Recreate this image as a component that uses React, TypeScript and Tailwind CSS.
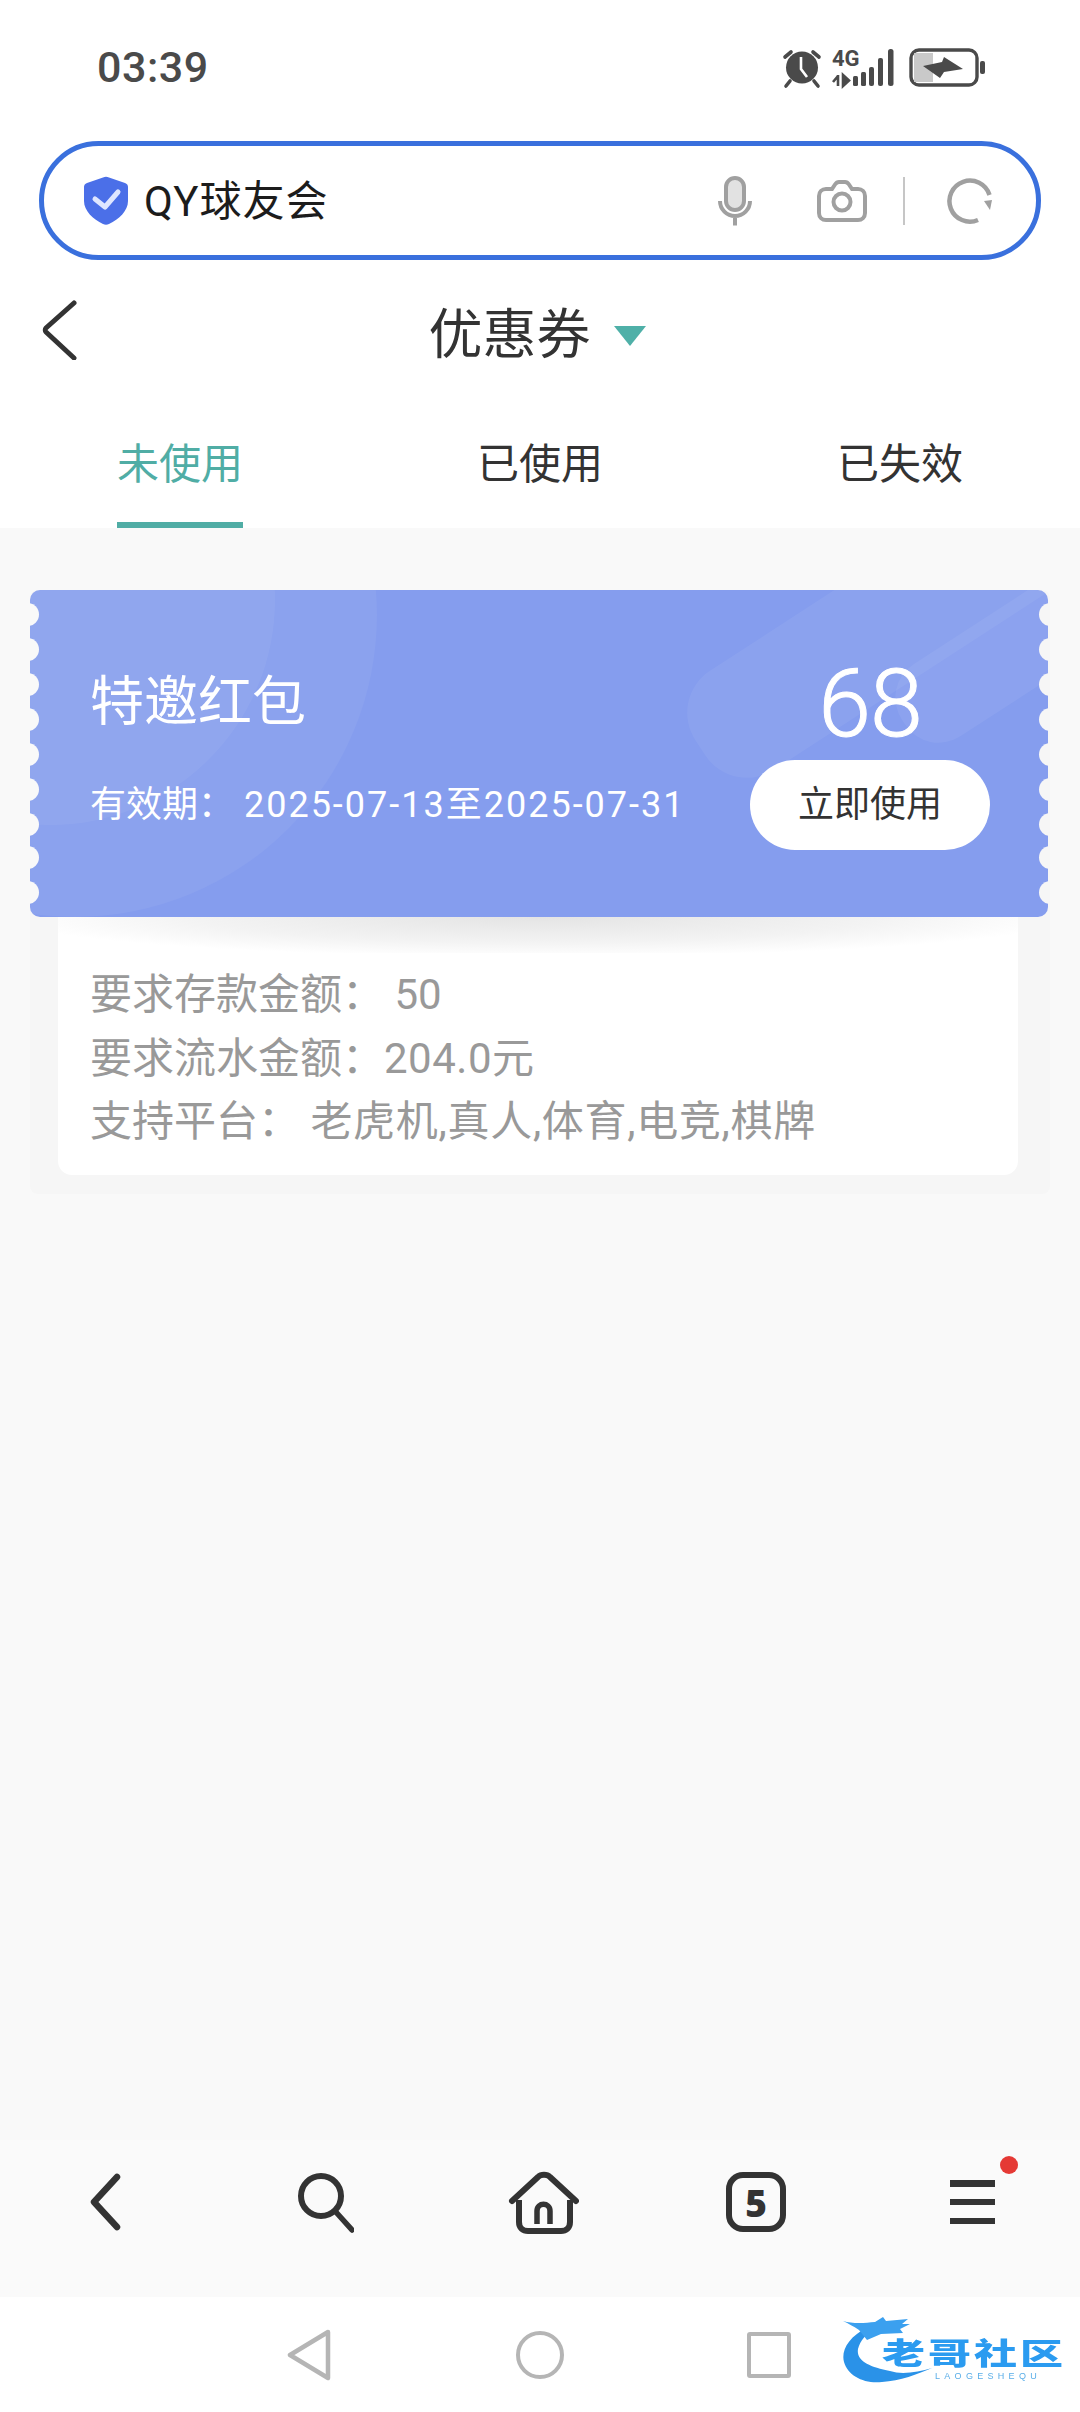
import React from "react";

const scallops = [25, 60, 95, 130, 165, 200, 235, 268, 303];

function StatusIcons() {
  return (
    <svg width="210" height="56" viewBox="0 0 210 56" fill="none" className="shrink-0">
      <g transform="translate(-780,-40)">
        <circle cx="802" cy="67.500" r="16" fill="#4a4a4a" />
        <path d="M801 57v12l6 8" stroke="#fff" strokeWidth="2.600" />
        <path d="M785 57l6-5M819 57l-6-5M790 81l-4 5M814 81l4 5" stroke="#4a4a4a" strokeWidth="3.600" strokeLinecap="round" />
        <text x="832" y="66" fontFamily="Roboto, sans-serif" fontWeight="700" fontSize="22" fill="#4a4a4a">4G</text>
        <path d="M838 75v11M833 82l5-6M843 75v11l6-5.500z" stroke="#4a4a4a" strokeWidth="2.600" fill="#4a4a4a" />
        <rect x="853" y="76" width="5" height="10" rx="1.500" fill="#4a4a4a" />
        <rect x="861" y="72" width="5" height="14" rx="1.500" fill="#4a4a4a" />
        <rect x="869" y="67" width="5" height="19" rx="2" fill="#4a4a4a" />
        <rect x="878" y="58" width="5" height="28" rx="2" fill="#4a4a4a" />
        <rect x="888" y="49" width="5.500" height="37" rx="2.500" fill="#4a4a4a" />
        <rect x="911" y="50" width="66" height="35" rx="8" fill="#fff" stroke="#4a4a4a" strokeWidth="3.400" />
        <path d="M914 53h19v29h-19z" fill="#c9c9c9" />
        <path d="M923 66L942 62L944 57L963 69L944 72L940 78z" fill="#4a4a4a" />
        <rect x="980" y="61" width="5" height="13" rx="2" fill="#4a4a4a" />
      </g>
    </svg>
  );
}

function TicketDecor() {
  return (
    <svg className="absolute inset-0" width="1018" height="327" viewBox="0 0 1018 327" fill="none">
      <circle cx="45" cy="25" r="302" fill="#ffffff" fillOpacity="0.05" />
      <circle cx="20" cy="10" r="225" fill="#ffffff" fillOpacity="0.05" />
      <rect width="620" height="118" rx="50" transform="translate(638 108) rotate(-33)" fill="#ffffff" fillOpacity="0.055" />
      <rect width="300" height="86" rx="40" transform="translate(850 96) rotate(-33)" fill="#ffffff" fillOpacity="0.06" />
    </svg>
  );
}

function Logo() {
  return (
    <div className="absolute left-[838px] top-[18px] w-[230px] h-[72px] blur-[0.6px]">
      <svg className="absolute left-0 top-0" width="100" height="72" viewBox="0 0 100 72" fill="none">
        <path d="M30 12C10 22 3 36 6 47c4 14 20 22 38 20 18-1 36-8 50-14-14 4-30 7-42 3C32 52 18 46 20 34c2-8 8-16 18-20z" fill="#2a92e8" />
        <path d="M5 6c10 3 22 2 32 1l8-5 3 4 22-2-6 5 8 0-10 5 3 4-22 1-14 6-8-10c-6-4-10-6-16-9z" fill="#3ba0ef" />
      </svg>
      <div className="absolute left-[44px] top-[24px] h-[30px] text-[43px] leading-[30px] font-black text-[#2b9bf0] tracking-[3px] scale-y-[0.68] origin-center font-['Liberation_Sans','Noto_Sans_CJK_SC',sans-serif] whitespace-nowrap">老哥社区</div>
      <div className="absolute left-[97px] top-[56px] h-[11px] text-[9px] leading-[11px] tracking-[4.300px] text-[#5aaee8] font-['Liberation_Sans',sans-serif] whitespace-nowrap">LAOGESHEQU</div>
    </div>
  );
}

export default function App() {
  return (
    <div className="w-[1080px] h-[2412px] flex flex-col bg-white overflow-hidden font-['Roboto','Noto_Sans_CJK_SC',sans-serif] text-[#333]">
      {/* status bar */}
      <div className="h-[141px] shrink-0 flex items-start justify-between pl-[97px] pr-[90px] pt-[40px]">
        <span className="text-[43px] leading-[54px] font-medium text-[#4a4a4a] tracking-[0.5px]">03:39</span>
        <StatusIcons />
      </div>

      {/* search */}
      <div className="h-[119px] shrink-0 mx-[39px] border-[5px] border-[#3a70dd] rounded-full flex items-center pl-[39px] pr-[43px]">
        <svg width="46" height="50" viewBox="0 0 46 50" className="shrink-0">
          <path d="M20 1.500c2-1 4-1 6 0l16 5.500c2 .7 3 2 3 4v14c0 10-9 18-19 23-2 1-4 1-6 0C10 43 1 35 1 25V11c0-2 1-3.300 3-4z" fill="#4b6fe8" />
          <path d="M12 23l10 8 13-15" stroke="#dfe6ff" strokeWidth="5" strokeLinecap="round" strokeLinejoin="round" fill="none" />
        </svg>
        <span className="ml-[15px] mt-[2px] text-[42px] leading-[50px] tracking-[1px] text-[#1c1c1c]">QY球友会</span>
        <div className="ml-auto flex items-center">
          <svg width="34" height="50" viewBox="0 0 34 50" fill="none" className="shrink-0">
            <rect x="8" y="2" width="18" height="32" rx="9" fill="#e2e2e2" stroke="#a0a0a0" strokeWidth="4" />
            <path d="M2 25a15 15 0 0030 0M17 40v9.500" stroke="#a0a0a0" strokeWidth="4" />
          </svg>
          <svg width="50" height="42" viewBox="0 0 50 42" fill="none" className="ml-[65px] shrink-0">
            <path d="M9 9h6l3-4.500C19 3 20.500 2 22 2h6c1.500 0 3 1 4 2.500L35 9h6c4 0 7 3 7 7v17c0 4-3 7-7 7H9c-4 0-7-3-7-7V16c0-4 3-7 7-7z" stroke="#a0a0a0" strokeWidth="4" />
            <circle cx="25" cy="22" r="8.500" stroke="#a0a0a0" strokeWidth="4" />
          </svg>
          <div className="ml-[36px] w-[2.500px] h-[48px] bg-[#c6c6c6] shrink-0" />
          <svg width="46" height="46" viewBox="0 0 46 46" fill="none" className="ml-[42px] shrink-0">
            <path d="M42.500 17A20.500 20.500 0 1031 42" stroke="#a0a0a0" strokeWidth="4.500" />
            <path d="M37 23l8-1-2 10z" fill="#a0a0a0" />
          </svg>
        </div>
      </div>

      {/* header */}
      <div className="h-[140px] shrink-0 relative flex items-center justify-center">
        <svg width="36" height="60" viewBox="0 0 36 60" fill="none" className="absolute left-[41px] top-[40px]">
          <path d="M33 3L5 28c-1 1-1 3 0 4l28 26" stroke="#333" strokeWidth="5" strokeLinecap="round" />
        </svg>
        <div className="flex items-center ml-[-6px] pt-[12px]">
          <span className="text-[54px] leading-[64px] text-[#333]">优惠券</span>
          <span className="ml-[23px] w-0 h-0 border-l-[16px] border-r-[16px] border-t-[20px] border-l-transparent border-r-transparent border-t-[#4fb0a8]" />
        </div>
      </div>

      {/* tabs */}
      <div className="h-[128px] shrink-0 grid grid-cols-3">
        <div className="relative flex items-center justify-center text-[42px] text-[#50ada5]">
          未使用
          <span className="absolute bottom-0 left-[117px] w-[126px] h-[6px] bg-[#50ada5]" />
        </div>
        <div className="flex items-center justify-center text-[42px] text-[#333]">已使用</div>
        <div className="flex items-center justify-center text-[42px] text-[#333]">已失效</div>
      </div>

      {/* content */}
      <div className="flex-1 bg-[#f9f9f9] pt-[62px] px-[30px]">
        <div className="bg-[#f6f6f6] rounded-[8px]">
          <div className="relative h-[327px] mr-[2px] rounded-[10px] bg-[#859dee] overflow-hidden text-white">
            <TicketDecor />
            {scallops.map((y) => (
              <React.Fragment key={y}>
                <span className="absolute left-[-3px] w-[12px] h-[23px] rounded-r-full bg-[#f9f9f9]" style={{ top: y - 12 }} />
                <span className="absolute right-[-3px] w-[12px] h-[23px] rounded-l-full bg-[#f6f6f6]" style={{ top: y - 12 }} />
              </React.Fragment>
            ))}
            <div className="relative flex justify-between h-full pl-[60px] pr-[58px]">
              <div className="pt-[78px]">
                <div className="text-[54px] leading-[70px]">特邀红包</div>
                <div className="mt-[44px] text-[36px] leading-[46px] whitespace-nowrap">
                  有效期： <span className="ml-[1px] tracking-[2px]">2025-07-13至2025-07-31</span>
                </div>
              </div>
              <div className="w-[240px] flex flex-col items-center pt-[59px]">
                <div className="text-[95px] leading-[110px] font-light tracking-[-1px] [-webkit-text-stroke:1px_white]">68</div>
                <button className="w-[240px] h-[90px] mt-[1px] rounded-full bg-white text-[#333] text-[36px]">立即使用</button>
              </div>
            </div>
          </div>
          <div className="ml-[28px] mr-[32px] relative bg-white rounded-b-[14px] h-[258px] pt-[46px] text-[42px] leading-[63.500px] text-[#999] overflow-hidden">
            <div className="absolute left-0 right-0 top-0 h-[36px] bg-[radial-gradient(ellipse_at_top,#e4e4e4_0%,#f3f3f3_50%,transparent_78%)]" />
            <div className="relative pl-[32px] whitespace-nowrap">
              <div>要求存款金额： 50</div>
              <div>要求流水金额：<span className="tracking-[0.5px]">204.0元</span></div>
              <div>支持平台： <span className="tracking-[0.7px]">老虎机,真人,体育,电竞,棋牌</span></div>
            </div>
          </div>
          <div className="h-[19px]" />
        </div>
      </div>

      {/* browser nav */}
      <div className="h-[157px] shrink-0 bg-[#fafafa] pt-[29px]">
        <div className="h-[66px] grid grid-cols-5 items-center justify-items-center">
          <svg width="32" height="58" viewBox="0 0 32 58" fill="none" className="ml-[-5px]">
            <path d="M27 4L4 29l23 25" stroke="#333" strokeWidth="6.500" strokeLinecap="round" strokeLinejoin="round" />
          </svg>
          <svg width="60" height="62" viewBox="0 0 60 62" fill="none">
            <circle cx="27" cy="25" r="20" stroke="#333" strokeWidth="6" />
            <path d="M41 40l17 19" stroke="#333" strokeWidth="5.500" strokeLinecap="round" />
          </svg>
          <svg width="78" height="66" viewBox="0 0 78 66" fill="none">
            <path d="M11 32L37 8c3-3 9-3 12 0l26 24" stroke="#333" strokeWidth="6" strokeLinecap="round" strokeLinejoin="round" />
            <path d="M18 31v22c0 6 4 9 9 9h33c5 0 9-3 9-9V31" stroke="#333" strokeWidth="6" />
            <path d="M36 55V42c0-9 13-9 13 0v13" stroke="#333" strokeWidth="5.500" />
          </svg>
          <div className="w-[60px] h-[60px] border-[6.500px] border-[#333] rounded-[17px] flex items-center justify-center text-[37px] leading-none font-extrabold text-[#333] font-['Open_Sans',sans-serif]">5</div>
          <div className="relative w-[45px] h-[44px] flex flex-col justify-between">
            <span className="h-[6.500px] bg-[#333]" />
            <span className="h-[6.500px] bg-[#333]" />
            <span className="h-[6.500px] bg-[#333]" />
            <span className="absolute left-[50px] top-[-24px] w-[18px] h-[18px] rounded-full bg-[#e53935]" />
          </div>
        </div>
      </div>

      {/* system nav */}
      <div className="h-[115px] shrink-0 bg-white relative flex items-start pt-[32px] pl-[287px]">
        <svg width="44" height="52" viewBox="0 0 44 52" fill="none" className="shrink-0">
          <path d="M41 3L3 26l38 23z" stroke="#b5b5b5" strokeWidth="4.500" strokeLinejoin="round" />
        </svg>
        <div className="ml-[185px] mt-[2px] w-[48px] h-[48px] rounded-full border-[4.500px] border-[#b5b5b5] shrink-0" />
        <div className="ml-[183px] mt-[3px] w-[44px] h-[46px] rounded-[3px] border-[4.500px] border-[#b5b5b5] shrink-0" />
        <Logo />
      </div>
    </div>
  );
}
